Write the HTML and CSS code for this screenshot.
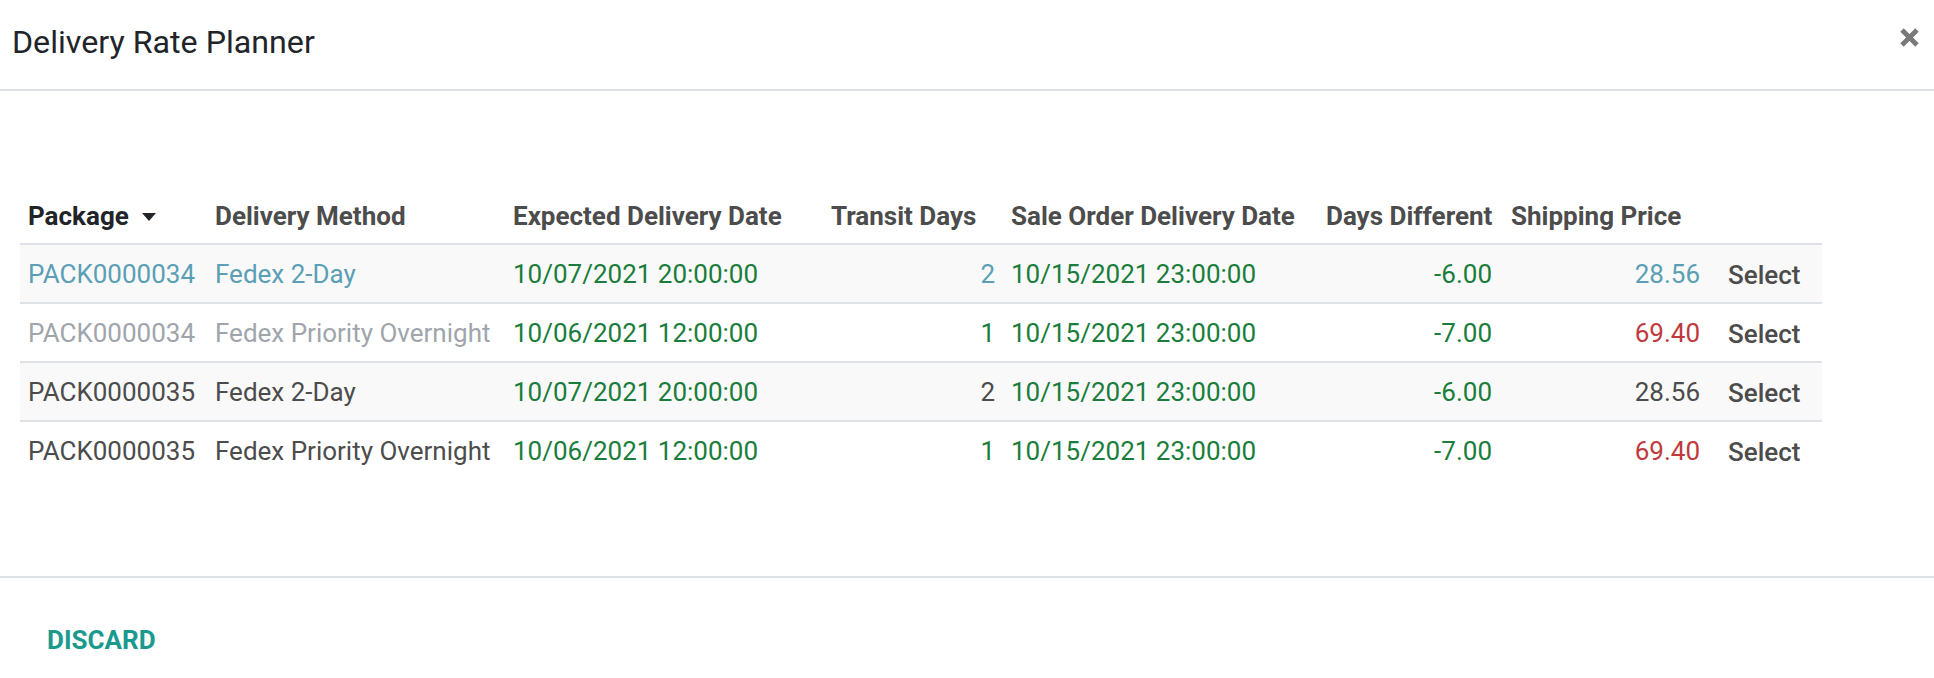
FILE: index.html
```html
<!DOCTYPE html>
<html>
<head>
<meta charset="utf-8">
<link rel="stylesheet" href="styles.css">
</head>
<body>
<div class="modal">
  <header class="modal-header">
    <h4 class="modal-title">Delivery Rate Planner</h4>
    <button class="close" aria-label="Close">
      <svg width="21" height="21" viewBox="0 0 21 21"><path d="M3 3 L18 18 M18 3 L3 18" stroke="#7a7a7a" stroke-width="4.8" stroke-linecap="butt"/></svg>
    </button>
  </header>
  <main class="modal-body">
    <table class="list">
      <colgroup>
        <col class="w1"><col class="w2"><col class="w3"><col class="w4"><col class="w5"><col class="w6"><col class="w7"><col class="w8">
      </colgroup>
      <thead>
        <tr>
          <th class="sorted">Package<svg class="caret" width="14" height="8" viewBox="0 0 14 8"><path d="M0 0 H14 L7 8 Z" fill="#212529"/></svg></th>
          <th>Delivery Method</th>
          <th>Expected Delivery Date</th>
          <th>Transit Days</th>
          <th>Sale Order Delivery Date</th>
          <th>Days Different</th>
          <th class="price-th">Shipping Price</th>
          <th></th>
        </tr>
      </thead>
      <tbody>
        <tr class="info stripe">
          <td>PACK0000034</td><td>Fedex 2-Day</td><td class="ok">10/07/2021 20:00:00</td><td class="num">2</td><td class="ok">10/15/2021 23:00:00</td><td class="num ok">-6.00</td><td class="num">28.56</td><td><span class="btn">Select</span></td>
        </tr>
        <tr class="muted">
          <td>PACK0000034</td><td>Fedex Priority Overnight</td><td class="ok">10/06/2021 12:00:00</td><td class="num ok">1</td><td class="ok">10/15/2021 23:00:00</td><td class="num ok">-7.00</td><td class="num bad">69.40</td><td><span class="btn">Select</span></td>
        </tr>
        <tr class="stripe">
          <td>PACK0000035</td><td>Fedex 2-Day</td><td class="ok">10/07/2021 20:00:00</td><td class="num">2</td><td class="ok">10/15/2021 23:00:00</td><td class="num ok">-6.00</td><td class="num">28.56</td><td><span class="btn">Select</span></td>
        </tr>
        <tr>
          <td>PACK0000035</td><td>Fedex Priority Overnight</td><td class="ok">10/06/2021 12:00:00</td><td class="num ok">1</td><td class="ok">10/15/2021 23:00:00</td><td class="num ok">-7.00</td><td class="num bad">69.40</td><td><span class="btn">Select</span></td>
        </tr>
      </tbody>
    </table>
  </main>
  <footer class="modal-footer">
    <button class="discard">DISCARD</button>
  </footer>
</div>
</body>
</html>
```

FILE: styles.css
```css
html, body {
  margin: 0;
  padding: 0;
  background: #ffffff;
}
body {
  font-family: Roboto, "Liberation Sans", Arial, sans-serif;
  color: #4c4c4c;
  width: 1934px;
  height: 678px;
  overflow: hidden;
}
.modal {
  display: flex;
  flex-direction: column;
  height: 678px;
}
.modal-header {
  display: flex;
  align-items: center;
  justify-content: space-between;
  border-bottom: 2px solid #dee2e6;
  padding: 0 14px 8px 12px;
  height: 81px;
}
.modal-title {
  margin: 0;
  font-size: 32.2px;
  font-weight: 400;
  color: #212529;
  line-height: 48px;
  padding-top: 2px;
}
.close {
  border: 0;
  background: transparent;
  padding: 0;
  width: 21px;
  height: 21px;
  margin-top: -6px;
  display: flex;
}
.modal-body {
  padding: 97px 0 0 20px;
  height: 388px;
}
.list {
  border-collapse: collapse;
  table-layout: fixed;
  width: 1802px;
  font-size: 26px;
}
.w1 { width: 187px; }
.w2 { width: 298px; }
.w3 { width: 318px; }
.w4 { width: 180px; }
.w5 { width: 315px; }
.w6 { width: 182px; }
.w7 { width: 208px; }
.w8 { width: 114px; }
th {
  text-align: left;
  font-weight: 700;
  color: #4c4c4c;
  height: 55px;
  padding: 0 8px;
  white-space: nowrap;
  vertical-align: middle;
  border-bottom: 2px solid #dee2e6;
}
th.sorted {
  color: #212529;
}
th.price-th {
  padding-left: 11px;
}
.caret {
  margin-left: 13px;
  vertical-align: 4px;
}
td {
  height: 57px;
  padding: 0 8px;
  white-space: nowrap;
  vertical-align: middle;
  border-top: 2px solid #dee2e6;
}
tbody tr:first-child td {
  border-top: 0;
}
tr.stripe td {
  background: #f9f9f9;
}
tr.info td { color: #5a9fb5; }
tr.muted td { color: #a0a5ab; }
td.num { text-align: right; }
tr td.ok { color: #1a7d3b; }
tr td.bad { color: #bf3a3d; }
.btn {
  display: inline-block;
  color: #4c4c4c;
  font-weight: 500;
  margin-left: 12px;
  padding-top: 3px;
}
.modal-footer {
  border-top: 2px solid #dee2e6;
  padding: 44px 0 0 47px;
  flex: 1;
}
.discard {
  border: 0;
  background: transparent;
  padding: 0;
  font-family: Roboto, "Liberation Sans", Arial, sans-serif;
  font-size: 26px;
  font-weight: 700;
  color: #1a998e;
  line-height: 36px;
}
```
